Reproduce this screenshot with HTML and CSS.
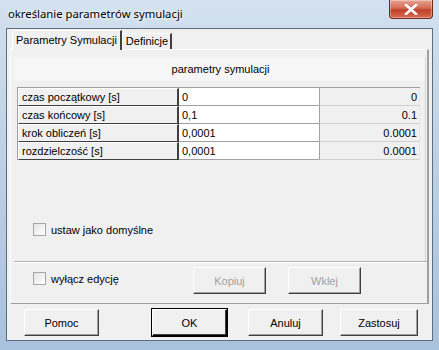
FILE: index.html
```html
<!DOCTYPE html>
<html lang="pl">
<head>
  <meta charset="UTF-8" />
  <title>określanie parametrów symulacji</title>
  <link rel="stylesheet" href="styles.css">
</head>
<body>
  <div class="window">
    <div class="titlebar">
      <span class="title">określanie parametrów symulacji</span>
      <div class="close">
        <svg width="14" height="11" viewBox="0 0 14 11">
          <path d="M2 1 L12 10 M12 1 L2 10" stroke="#fff" stroke-width="2.6" stroke-linecap="square"/>
        </svg>
      </div>
    </div>

    <div class="client">
      <div class="tabs">
        <div class="tab active">Parametry Symulacji</div>
        <div class="tab">Definicje</div>
      </div>

      <div class="panel">
        <div class="group">
          <div class="group-head">parametry symulacji</div>
          <table class="params">
            <tr>
              <td class="lbl">czas początkowy [s]</td>
              <td class="val">0</td>
              <td class="cur">0</td>
            </tr>
            <tr>
              <td class="lbl">czas końcowy [s]</td>
              <td class="val">0,1</td>
              <td class="cur">0.1</td>
            </tr>
            <tr>
              <td class="lbl">krok obliczeń [s]</td>
              <td class="val">0,0001</td>
              <td class="cur">0.0001</td>
            </tr>
            <tr>
              <td class="lbl">rozdzielczość [s]</td>
              <td class="val">0,0001</td>
              <td class="cur">0.0001</td>
            </tr>
          </table>

          <label class="check default-check">
            <span class="box"></span>
            <span>ustaw jako domyślne</span>
          </label>
        </div>

        <div class="edit-row">
          <label class="check">
            <span class="box"></span>
            <span>wyłącz edycję</span>
          </label>
          <button class="btn" disabled>Kopiuj</button>
          <button class="btn" disabled>Wklej</button>
        </div>
      </div>

      <div class="buttons">
        <button class="btn">Pomoc</button>
        <button class="btn default">OK</button>
        <button class="btn">Anuluj</button>
        <button class="btn wide">Zastosuj</button>
      </div>
    </div>
  </div>
</body>
</html>
```

FILE: styles.css
```css
* {
  box-sizing: border-box;
}
body {
  margin: 0;
  width: 439px;
  height: 350px;
  overflow: hidden;
  font-family: 'Liberation Sans', Arial, sans-serif;
  font-size: 11px;
  color: #000;
}

/* Aero frame */
.window {
  width: 439px;
  height: 350px;
  padding: 0 6px 9px 6px;
  background: linear-gradient(180deg, #d3e1ef 0%, #bfd2e6 40%, #a9c1dc 100%);
  display: flex;
  flex-direction: column;
}
.titlebar {
  height: 28px;
  display: flex;
  justify-content: space-between;
  align-items: flex-start;
}
.title {
  font-family: 'Noto Sans', 'Open Sans', sans-serif;
  font-size: 11.3px;
  padding: 6px 0 0 2px;
  color: #000;
  text-shadow: 0 0 6px #fff, 0 0 3px #fff;
}
.close {
  width: 44px;
  height: 19px;
  border: 1px solid #6b2a22;
  border-top: none;
  border-radius: 0 0 4px 4px;
  background: linear-gradient(180deg, #e8a493 0%, #d36a55 45%, #c0412b 55%, #d86a4e 100%);
  display: flex;
  justify-content: center;
  align-items: center;
  box-shadow: inset 0 0 0 1px rgba(255,255,255,0.35);
}

.client {
  flex: 1;
  background: #f0f0f0;
  border: 1px solid #5f6e7e;
  padding: 1px 3px 0 3px;
  display: flex;
  flex-direction: column;
}

/* Tabs */
.tabs {
  display: flex;
  height: 19px;
  align-items: flex-end;
  padding-left: 2px;
  position: relative;
  z-index: 1;
}
.tab {
  height: 16px;
  padding: 0 2px 0 3px;
  border-top: 1px solid #fff;
  border-left: 1px solid #fff;
  border-right: 2px solid #404040;
  background: #f0f0f0;
  line-height: 15px;
}
.tab.active {
  height: 20px;
  padding: 2px 3px 0 3px;
  margin-bottom: -1px;
}

.panel {
  height: 255px;
  border-top: 1px solid #fff;
  border-left: 1px solid #fff;
  border-right: 2px solid #a0a0a0;
  border-bottom: 1px solid #a0a0a0;
  padding: 7px 0 0 3px;
  display: flex;
  flex-direction: column;
}

.group {
  height: 204px;
  border-right: 1px solid #d8d8d8;
  margin-right: 1px;
}
.group-head {
  height: 24px;
  background: #f6f6f6;
  text-align: center;
  line-height: 24px;
  padding-left: 2px;
}

.params {
  margin: 6px 0 0 3px;
  border-collapse: separate;
  border-spacing: 0;
  width: 403px;
  border-top: 1px solid #a0a0a0;
  border-left: 1px solid #a0a0a0;
}
.params td {
  height: 18px;
  padding: 0 2px 0 3px;
  line-height: 16px;
  white-space: nowrap;
}
.params .lbl {
  width: 161px;
  background: #f0f0f0;
  border-top: 1px solid #fff;
  border-left: 1px solid #fff;
  border-right: 2px solid #404040;
  border-bottom: 1px solid #404040;
}
.params .val {
  width: 140px;
  background: #fff;
  border-bottom: 1px solid #a0a0a0;
}
.params .cur {
  background: #f0f0f0;
  text-align: right;
  border-left: 1px solid #a0a0a0;
  border-bottom: 1px solid #d0d0d0;
  border-right: 1px solid #e8e8e8;
}

.check {
  display: flex;
  align-items: center;
  gap: 5px;
}
.box {
  width: 13px;
  height: 13px;
  background: linear-gradient(135deg, #e4e4e4, #fff);
  border: 1px solid #a6a6a6;
}
.default-check {
  margin: 63px 0 0 19px;
}

.edit-row {
  border-top: 1px solid #b0b0b0;
  box-shadow: inset 0 1px 0 #fff;
  flex: 1;
  display: flex;
  align-items: flex-start;
  padding: 5px 0 0 19px;
}
.edit-row .check {
  width: 160px;
  margin-top: 5px;
}
.edit-row .btn {
  width: 73px;
  margin-right: 22px;
}

/* Buttons */
.btn {
  flex: none;
  height: 27px;
  font-family: 'Liberation Sans', Arial, sans-serif;
  font-size: 11px;
  color: #000;
  background: #f0f0f0;
  border-top: 1px solid #fff;
  border-left: 1px solid #fff;
  border-right: 1px solid #404040;
  border-bottom: 1px solid #404040;
  box-shadow: inset -1px -1px 0 #a0a0a0;
  padding: 0;
}
.btn:disabled {
  color: #a0a0a0;
}
.btn.default {
  outline: 1px solid #000;
  outline-offset: 0;
  border-right-color: #000;
  border-bottom-color: #000;
  box-shadow: inset -1px -1px 0 #404040, inset 1px 1px 0 #f0f0f0;
}

.buttons {
  flex: 1;
  display: flex;
  align-items: center;
  gap: 0;
  padding: 1px 0 0 14px;
}
.buttons .btn {
  width: 75px;
}
.buttons .btn + .btn {
  margin-left: 21px;
}
.buttons .btn.default {
  margin-left: 53px;
}
.buttons .btn.wide {
  width: 78px;
  margin-left: 17px;
}
```
